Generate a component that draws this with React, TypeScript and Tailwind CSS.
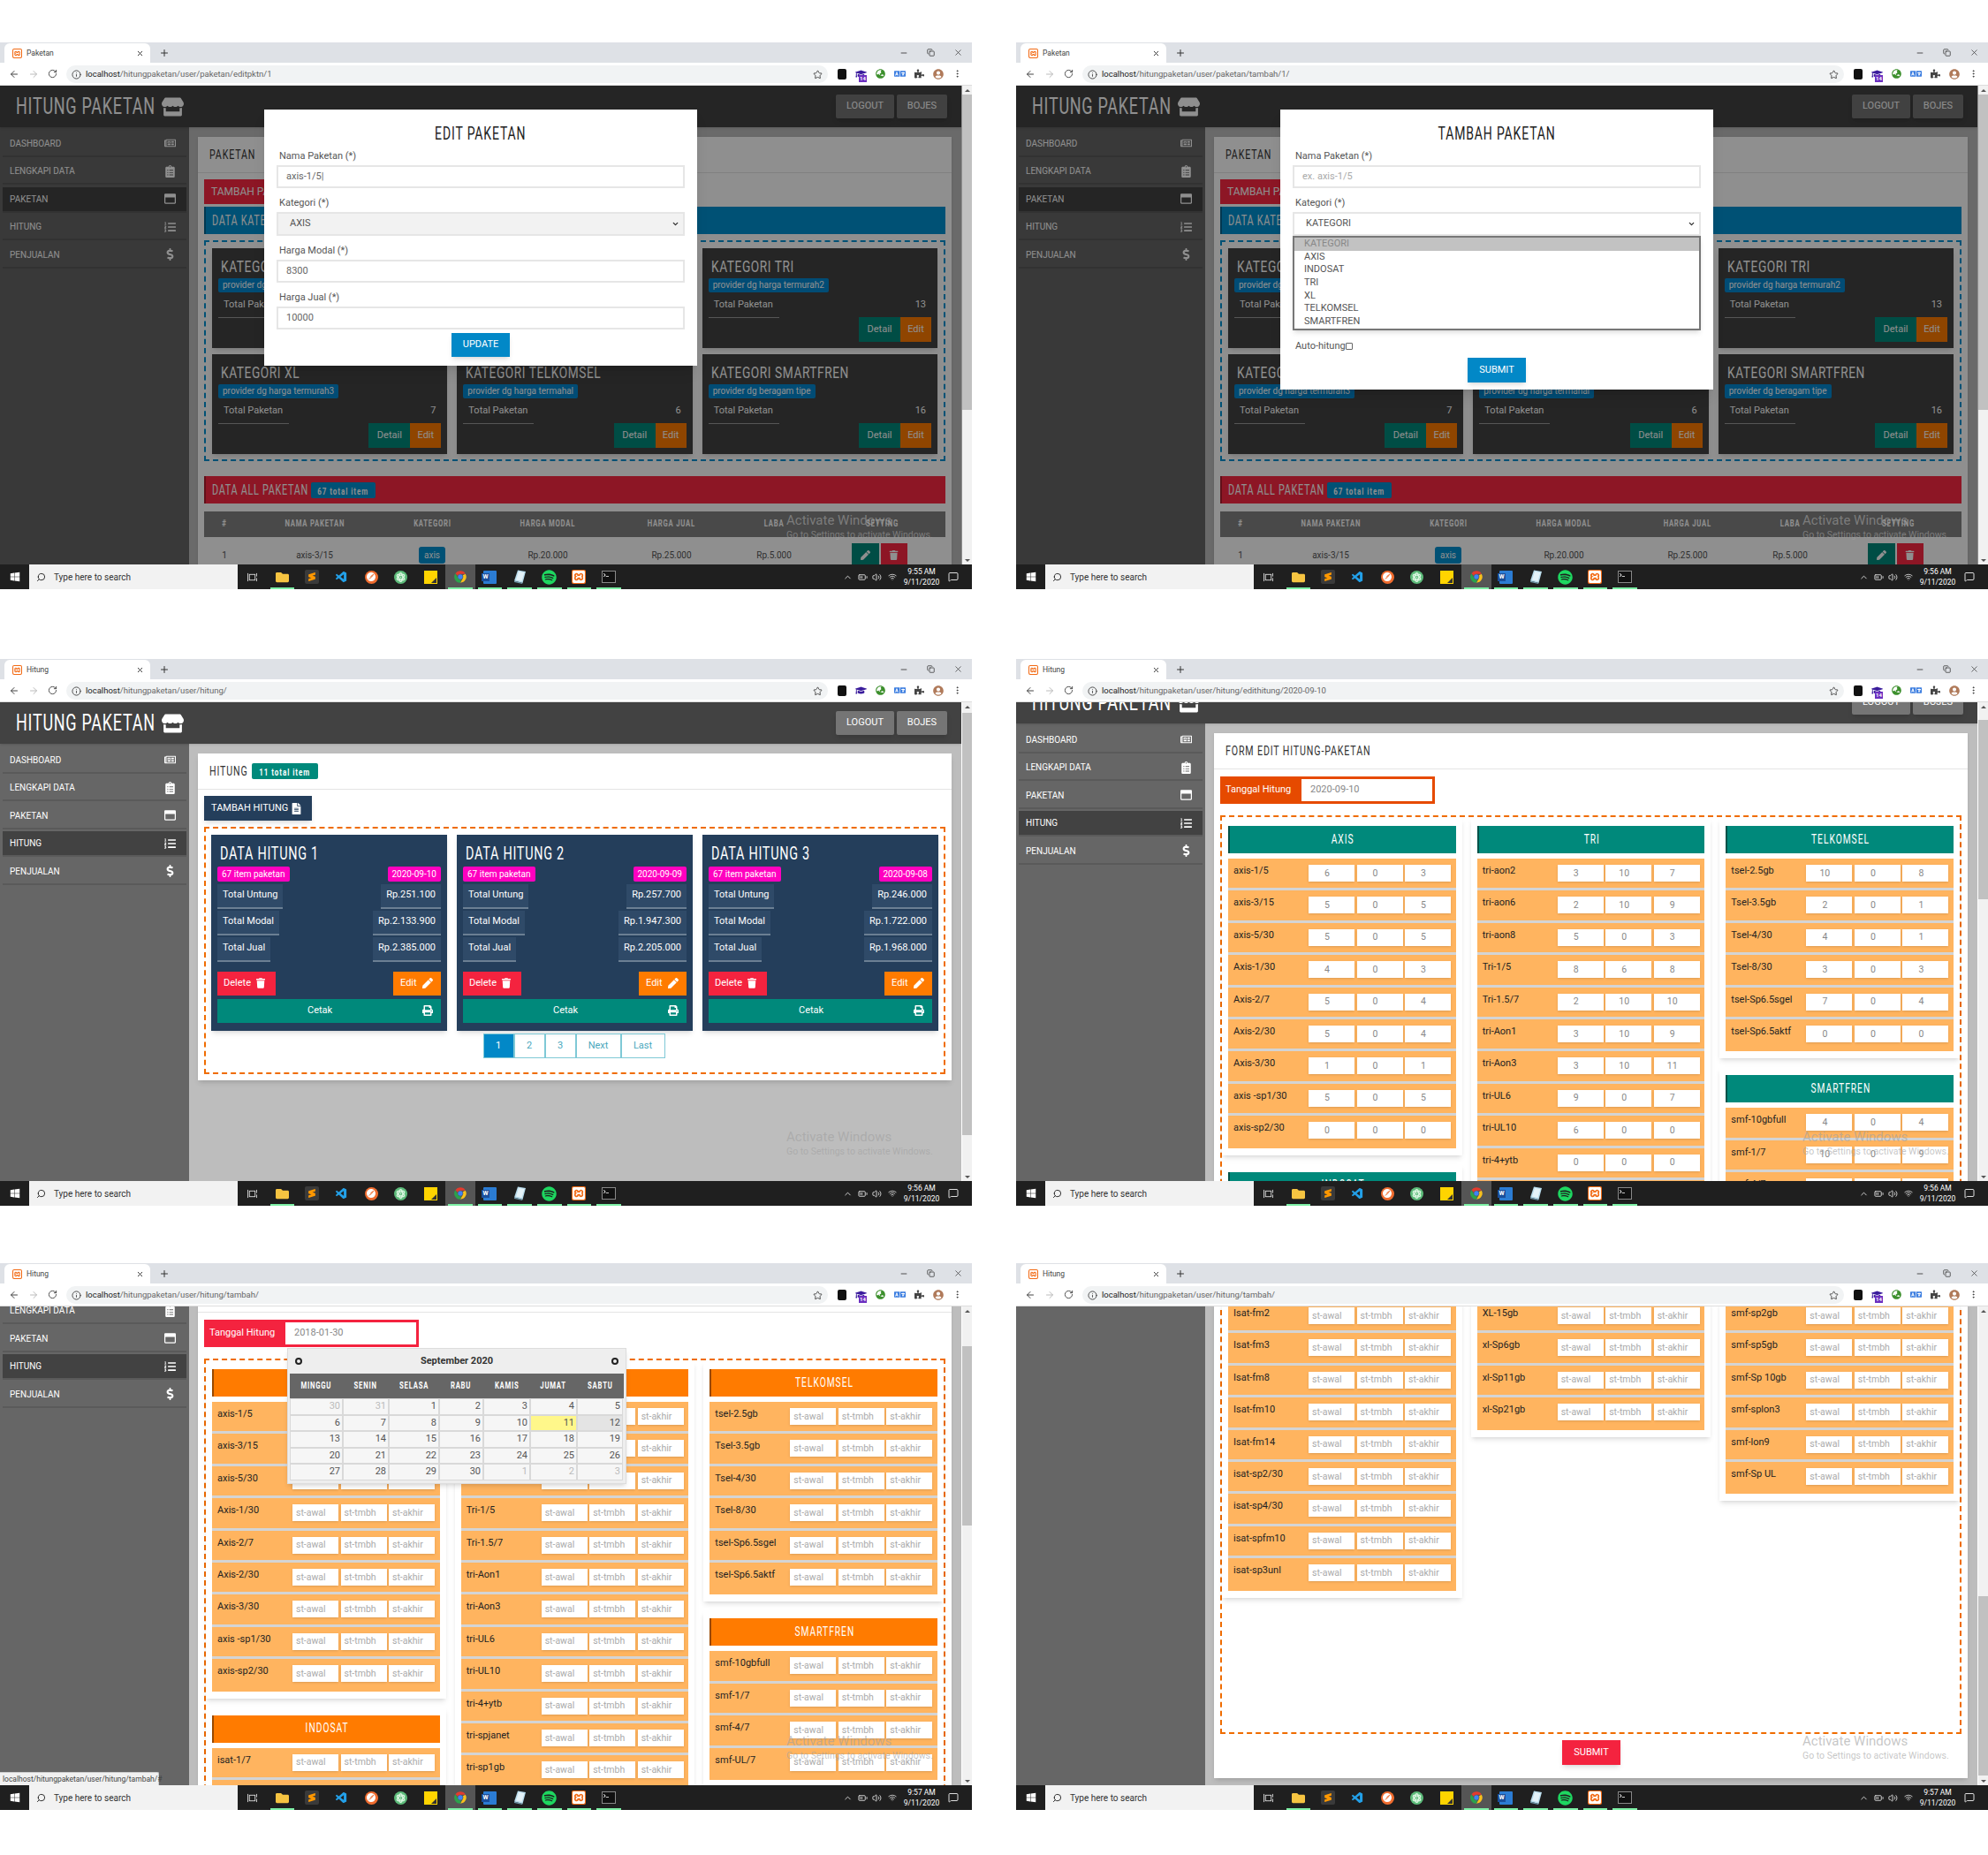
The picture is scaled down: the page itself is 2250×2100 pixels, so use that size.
import type { ReactNode } from "react";
import { ArrowLeft, ArrowRight, RotateCw, Info, Star, Plus, X, Minus, MoreVertical, ChevronUp, ChevronDown, Search, MessageSquare, Volume2, Wifi, BatteryMedium, Copy } from "lucide-react";
import { FaStore, FaRegNewspaper, FaClipboardList, FaRegWindowMaximize, FaListOl, FaDollarSign, FaTrash, FaPen, FaPrint, FaWindows, FaSpotify, FaAtom, FaFolder, FaPuzzlePiece, FaGraduationCap, FaGlobeAsia, FaLanguage, FaUserCircle, FaTerminal, FaFileAlt } from "react-icons/fa";
import { VscVscode } from "react-icons/vsc";
import { SiPostman, SiXampp, SiSublimetext } from "react-icons/si";

// no condensed face is installed, so the display type is Roboto squeezed sideways
function Osw({ children, className = "", scale = "scale-x-[0.71]", origin = "origin-left" }: { children: ReactNode; className?: string; scale?: string; origin?: string }) {
    return <span className={`inline-block whitespace-nowrap ${scale} ${origin} ${className}`}>{children}</span>;
}

function Xampp({ size = 11 }: { size?: number }) {
    return (
        <div className="flex items-center justify-center bg-[#f26a14] rounded-[2px] text-white" style={{ width: size, height: size }}>
            <SiXampp size={size - 2} />
        </div>
    );
}

function ChromeLogo() {
    return (
        <svg width="16" height="16" viewBox="0 0 24 24">
            <path d="M12 2a10 10 0 0 1 8.7 5H12a5 5 0 0 0-4.6 3L3.6 6.2A10 10 0 0 1 12 2z" fill="#e33b2e" />
            <path d="M20.7 7A10 10 0 0 1 12 22l4.3-7.5A5 5 0 0 0 16.3 9.5z" fill="#f8c11c" />
            <path d="M3.6 6.2l4.3 7.5a5 5 0 0 0 5.3 3.2L12 22A10 10 0 0 1 3.6 6.2z" fill="#2ba24c" />
            <circle cx="12" cy="12" r="4" fill="#3f83f3" />
        </svg>
    );
}

function TaskView() {
    return (
        <svg width="11" height="11" viewBox="0 0 12 12" fill="none" stroke="#ddd">
            <rect x="2.5" y="2.5" width="7" height="7" />
            <path d="M0.5 1v10M11.5 1v4M11.5 7v4" />
        </svg>
    );
}

function NotesIcon() {
    return (
        <svg width="15" height="16" viewBox="0 0 15 16">
            <path d="M5 0.5L14 2L10.5 15L1 12.5z" fill="#b9dcec" />
            <path d="M1 12.5L10.5 15L10 16L1 14z" fill="#6d93a6" />
            <path d="M6 2L12.5 3L9.5 13L3 11.5z" fill="#e4f2f8" />
        </svg>
    );
}

function TabStrip({ title }: { title: string }) {
    return (
        <div className="h-[23px] bg-[#dee1e6] flex items-end pl-[5px] shrink-0">
            <div className="w-[165px] h-[22px] bg-white rounded-t-[6px] flex items-center pl-[9px] pr-[7px]">
                <Xampp />
                <span className="ml-[5px] text-[8.5px] text-[#444] flex-1">{title}</span>
                <X className="w-[9px] h-[9px] text-[#333]" strokeWidth={2.5} />
            </div>
            <Plus className="w-[12px] h-[12px] ml-[10px] mb-[5px] text-[#333]" strokeWidth={2} />
            <div className="ml-auto h-full flex items-center pr-[10px] gap-[21px] text-[#333]">
                <Minus className="w-[10px] h-[10px]" />
                <Copy className="w-[9px] h-[9px]" />
                <X className="w-[11px] h-[11px]" strokeWidth={1.5} />
            </div>
        </div>
    );
}

function Toolbar({ url, badge }: { url: [string, string]; badge: boolean }) {
    return (
        <div className="h-[26px] bg-white flex items-center shrink-0 border-b border-[#ddd]">
            <div className="w-[75px] pl-[10px] flex items-center gap-[10px]">
                <ArrowLeft className="w-[12px] h-[12px] text-[#444]" />
                <ArrowRight className="w-[12px] h-[12px] text-[#bbb]" />
                <RotateCw className="w-[11px] h-[11px] text-[#444]" />
            </div>
            <div className="w-[862px] h-[20px] rounded-full bg-[#f1f3f4] flex items-center pl-[6px] pr-[6px] pt-[1px]">
                <Info className="w-[11px] h-[11px] text-[#444]" />
                <span className="ml-[5px] text-[9.5px] text-[#222]">{url[0]}</span>
                <span className="text-[9.5px] text-[#666]">{url[1]}</span>
                <Star className="w-[11px] h-[11px] ml-auto text-[#444]" />
            </div>
            <div className="flex-1 flex items-center pl-[11px] pr-[11px] justify-between">
                <div className="w-[10px] h-[12px] bg-[#111] rounded-[2px]" />
                <div className="relative">
                    <FaGraduationCap className="w-[13px] h-[13px] text-[#3a1c9c]" />
                    {badge && <span className="absolute left-[4px] top-[8px] bg-[#6b2fc0] text-white text-[6px] leading-[8px] px-[1px] font-bold">14</span>}
                </div>
                <FaGlobeAsia className="w-[11px] h-[11px] text-[#3c8f2c]" />
                <FaLanguage className="w-[13px] h-[13px] text-[#3b7de0]" />
                <FaPuzzlePiece className="w-[11px] h-[11px] text-[#444]" />
                <FaUserCircle className="w-[12px] h-[12px] text-[#b07a5a]" />
                <MoreVertical className="w-[11px] h-[11px] text-[#333]" />
            </div>
        </div>
    );
}

function Slot({ children, on, active }: { children: ReactNode; on?: boolean; active?: boolean }) {
    return (
        <div className={`relative w-[33.6px] h-full flex items-center justify-center ${active ? "bg-[#555]" : ""}`}>
            {children}
            {on && <div className="absolute left-[3px] right-[3px] bottom-0 h-[2px] bg-[#7df0a5]" />}
        </div>
    );
}

function Taskbar({ time }: { time: string }) {
    return (
        <div className="h-[28px] bg-[#1f1f1f] flex items-center shrink-0 text-white">
            <div className="w-[33px] flex justify-center">
                <FaWindows className="w-[12px] h-[12px]" />
            </div>
            <div className="w-[236px] h-full bg-[#f2f2f2] flex items-center pl-[8px]">
                <Search className="w-[11px] h-[11px] text-[#222] -scale-x-100" />
                <span className="ml-[9px] text-[10px] text-[#333]">Type here to search</span>
            </div>
            <div className="h-full flex">
                <Slot><TaskView /></Slot>
                <Slot on><FaFolder className="w-[15px] h-[15px] text-[#f6c441]" /></Slot>
                <Slot><div className="w-[16px] h-[16px] bg-[#3a3a3a] rounded-[2px] flex items-center justify-center"><SiSublimetext className="w-[10px] h-[10px] text-[#ff9800]" /></div></Slot>
                <Slot><VscVscode className="w-[15px] h-[15px] text-[#23a0e8]" /></Slot>
                <Slot><div className="w-[15px] h-[15px] rounded-full bg-[#ef6c2f] flex items-center justify-center"><SiPostman className="w-[10px] h-[10px] text-white" /></div></Slot>
                <Slot><div className="w-[15px] h-[15px] rounded-full bg-[#5dbb7a] flex items-center justify-center"><FaAtom className="w-[11px] h-[11px] text-[#d9f5df]" /></div></Slot>
                <Slot><div className="relative w-[15px] h-[15px] bg-[#ffd400]"><div className="absolute right-[1px] bottom-[1px] w-0 h-0 border-l-[6px] border-l-transparent border-b-[6px] border-b-[#333]" /></div></Slot>
                <Slot on active><ChromeLogo /></Slot>
                <Slot on><div className="relative w-[15px] h-[15px] bg-[#2b7cd3] rounded-[1px]"><div className="absolute -left-[2px] top-[3px] w-[9px] h-[9px] bg-[#1a4f9c] text-white text-[7px] leading-[9px] text-center font-bold">W</div></div></Slot>
                <Slot on><NotesIcon /></Slot>
                <Slot on><FaSpotify className="w-[17px] h-[17px] text-[#1ed760]" /></Slot>
                <Slot on><Xampp size={16} /></Slot>
                <Slot on><div className="w-[16px] h-[14px] bg-[#111] border border-[#888] flex items-start p-[1px]"><FaTerminal className="w-[6px] h-[6px] text-white" /></div></Slot>
            </div>
            <div className="ml-auto flex items-center pr-[15px] text-[#ddd]">
                <ChevronUp className="w-[11px] h-[11px]" />
                <BatteryMedium className="w-[11px] h-[11px] ml-[6px]" />
                <Volume2 className="w-[11px] h-[11px] ml-[5px]" />
                <Wifi className="w-[10px] h-[10px] ml-[7px]" />
                <div className="ml-[6px] w-[44px] text-center text-[8.5px] leading-[12px] text-white">
                    <div>{time}</div>
                    <div>9/11/2020</div>
                </div>
                <MessageSquare className="w-[12px] h-[12px] ml-[8px]" />
            </div>
        </div>
    );
}

function Scrollbar({ thumb }: { thumb: string }) {
    return (
        <div className="w-[11px] ml-[1px] bg-[#f1f1f1] flex flex-col items-center shrink-0">
            <div className="h-[10px] flex items-center text-[#555]"><div className="w-0 h-0 border-x-[3px] border-x-transparent border-b-[3px] border-b-[#555]" /></div>
            <div className={`w-full bg-[#c1c1c1] shrink-0 ${thumb}`} />
            <div className="mt-auto h-[10px] flex items-center"><div className="w-0 h-0 border-x-[3px] border-x-transparent border-t-[3px] border-t-[#555]" /></div>
        </div>
    );
}

function Watermark() {
    return (
        <div className="absolute left-[890px] top-[482px] text-[#a0a0a0]/60 z-30 pointer-events-none">
            <div className="text-[15px] leading-[20px]">Activate Windows</div>
            <div className="text-[10.5px] leading-[14px] whitespace-nowrap">Go to Settings to activate Windows.</div>
        </div>
    );
}

function Browser({ title, url, time, thumb, badge = true, over, children }: { title: string; url: [string, string]; time: string; thumb: string; badge?: boolean; over?: ReactNode; children: ReactNode }) {
    return (
        <div className="w-[1100px] h-[619px] flex flex-col overflow-hidden bg-white">
            <TabStrip title={title} />
            <Toolbar url={url} badge={badge} />
            <div className="relative flex-1 flex min-h-0">
                <div className="relative flex-1 overflow-hidden">{children}</div>
                <Scrollbar thumb={thumb} />
                {over}
                <Watermark />
            </div>
            <Taskbar time={time} />
        </div>
    );
}

const MENU = [
    { name: "DASHBOARD", icon: FaRegNewspaper },
    { name: "LENGKAPI DATA", icon: FaClipboardList },
    { name: "PAKETAN", icon: FaRegWindowMaximize },
    { name: "HITUNG", icon: FaListOl },
    { name: "PENJUALAN", icon: FaDollarSign },
];

function Sidebar({ active }: { active?: string }) {
    return (
        <div className="w-[214px] bg-[#666] shrink-0 pt-[2px] pl-[3px] pr-[3px] min-h-[700px]">
            {active && MENU.map((m) => (
                <div key={m.name} className={`h-[29px] mt-[2.6px] flex items-center pl-[8px] pr-[12px] text-white border-b-2 border-[#5a5a5a] ${m.name === active ? "bg-[#424242]" : ""}`}>
                    <span className="text-[10px] flex-1">{m.name}</span>
                    <m.icon className="w-[13px] h-[14px]" />
                </div>
            ))}
        </div>
    );
}

function Header() {
    return (
        <div className="h-[47px] bg-[#424242] flex items-center pl-[18px] pr-[16px] shadow-sm relative z-10">
            <div className="w-[165px]">
                <Osw className="text-white text-[25px] tracking-[1px]" scale="scale-x-[0.72]">HITUNG PAKETAN</Osw>
            </div>
            <FaStore className="w-[25px] h-[22px] text-white" />
            <div className="ml-auto flex gap-[3px]">
                <div className="w-[66px] h-[27px] bg-[#757575] rounded-[2px] shadow-md text-white text-[11px] flex items-center justify-center">LOGOUT</div>
                <div className="w-[57px] h-[27px] bg-[#757575] rounded-[2px] shadow-md text-white text-[11px] flex items-center justify-center">BOJES</div>
            </div>
        </div>
    );
}

function AppPage({ active, scroll, children }: { active: string; scroll: string; children: ReactNode }) {
    return (
        <div className={scroll}>
            <Header />
            <div className="flex">
                <Sidebar active={active} />
                <div className="flex-1 bg-[#bdbdbd] pl-[10px] pr-[11px] pt-[11px] min-h-[700px]">{children}</div>
            </div>
        </div>
    );
}

function CardHead({ children }: { children: ReactNode }) {
    return <div className="h-[41px] border-b border-[#e4e4e4] flex items-center pl-[13px] gap-[5px]">{children}</div>;
}

function Title({ children, box = "" }: { children: ReactNode; box?: string }) {
    return (
        <div className={box}>
            <Osw className="text-[15px] tracking-[1.2px] text-[#333]">{children}</Osw>
        </div>
    );
}

function Bar({ bg, children }: { bg: string; children: ReactNode }) {
    return (
        <div className={`h-[31px] flex items-center pl-[7px] border-l-2 border-black/30 ${bg}`}>
            {children}
        </div>
    );
}

const KATEGORI = [
    { name: "KATEGORI AXIS", note: "provider dg harga termurah1", total: 9 },
    { name: "KATEGORI INDOSAT", note: "provider dg harga murah", total: 16 },
    { name: "KATEGORI TRI", note: "provider dg harga termurah2", total: 13 },
    { name: "KATEGORI XL", note: "provider dg harga termurah3", total: 7 },
    { name: "KATEGORI TELKOMSEL", note: "provider dg harga termahal", total: 6 },
    { name: "KATEGORI SMARTFREN", note: "provider dg beragam tipe", total: 16 },
];

function KategoriCard({ name, note, total }: { name: string; note: string; total: number }) {
    return (
        <div className="h-[113px] bg-[#424242] shadow-md px-[7px] text-white">
            <div className="leading-[24px] pl-[3px] pt-[9px] h-[34px]">
                <Osw className="text-[19px] tracking-[0.8px]" scale="scale-x-[0.72]">{name}</Osw>
            </div>
            <div className="w-fit h-[16px] leading-[16px] rounded-[2px] bg-[#0288d1] px-[5px] text-[10px]">{note}</div>
            <div className="flex justify-between mt-[7px] text-[11px] px-[6px] leading-[14px]">
                <span className="w-[68px] whitespace-nowrap">Total Paketan</span>
                <span>{total}</span>
            </div>
            <div className="flex justify-between items-start mt-[7px]">
                <div className="w-[80px] h-[1px] bg-[#999]" />
                <div className="flex text-[11px]">
                    <div className="w-[47px] h-[28px] bg-[#00897b] flex items-center justify-center">Detail</div>
                    <div className="w-[35px] h-[28px] bg-[#ff7b00] flex items-center justify-center">Edit</div>
                </div>
            </div>
        </div>
    );
}

const TH = ["#", "NAMA PAKETAN", "KATEGORI", "HARGA MODAL", "HARGA JUAL", "LABA", "SETTING"];
const COLS = "grid grid-cols-[46px_158px_108px_154px_126px_106px_138px] items-center justify-items-center text-center";

function PaketanBody() {
    return (
        <div className="bg-white shadow-sm">
            <CardHead><Title>PAKETAN</Title></CardHead>
            <div className="px-[7px] pt-[7px]">
                <div className="w-[150px] h-[28px] bg-[#fb2843] text-white text-[12px] flex items-center pl-[8px] mb-[3px]">TAMBAH PAKETAN</div>
                <Bar bg="bg-[#0090d0]">
                    <Osw className="text-white text-[16px] tracking-[1px]" scale="scale-x-[0.68]">DATA KATEGORI</Osw>
                </Bar>
                <div className="mt-[7px] h-[250px] border-2 border-dashed border-[#0090d0] p-[7px] grid grid-cols-3 gap-x-[11px] gap-y-[7px]">
                    {KATEGORI.map((k) => <KategoriCard key={k.name} {...k} />)}
                </div>
                <div className="mt-[17px]">
                    <Bar bg="bg-[#fb2843]">
                        <div className="w-[112px]">
                            <Osw className="text-white text-[16px] tracking-[1px]" scale="scale-x-[0.68]">DATA ALL PAKETAN</Osw>
                        </div>
                        <div className="w-[73px] h-[18px] leading-[18px] rounded-[2px] bg-[#0090d0] text-white text-center">
                            <Osw className="text-[10px] font-bold tracking-[1.2px]" scale="scale-x-[0.8]" origin="origin-center">67 total item</Osw>
                        </div>
                    </Bar>
                </div>
                <div className={`${COLS} mt-[9px] h-[29px] bg-[#828282] text-white`}>
                    {TH.map((t) => <Osw key={t} className="text-[11px] font-bold tracking-[1.1px]" scale="scale-x-[0.7]" origin="origin-center">{t}</Osw>)}
                </div>
                <div className={`${COLS} h-[40px] text-[10px] text-[#555]`}>
                    <span>1</span>
                    <span>axis-3/15</span>
                    <span><span className="inline-block rounded-[3px] bg-[#0090d0] text-white px-[6px] py-[2px]">axis</span></span>
                    <span>Rp.20.000</span>
                    <span>Rp.25.000</span>
                    <span>Rp.5.000</span>
                    <span className="flex justify-center gap-[2px] pr-[6px] text-white self-start mt-[7px]">
                        <span className="w-[31px] h-[26px] bg-[#00897b] flex items-center justify-center"><FaPen className="w-[11px] h-[11px]" /></span>
                        <span className="w-[30px] h-[26px] bg-[#fb2843] flex items-center justify-center"><FaTrash className="w-[11px] h-[11px]" /></span>
                    </span>
                </div>
            </div>
        </div>
    );
}

function Label({ children }: { children: ReactNode }) {
    return <div className="text-[11px] text-[#555] pl-[3px] h-[14px] leading-[14px] mb-[3px]">{children}</div>;
}

function Field({ label, value, placeholder }: { label: string; value?: string; placeholder?: string }) {
    return (
        <div className="mb-[10px]">
            <Label>{label}</Label>
            <div className="h-[26px] border-2 border-[#e6e6e6] flex items-center pl-[9px] text-[11px] text-[#666]">
                {value}
                {placeholder && <span className="text-[#aaa]">{placeholder}</span>}
            </div>
        </div>
    );
}

function Modal({ h, title, children }: { h: string; title: string; children: ReactNode }) {
    return (
        <>
            <div className="absolute left-0 top-0 w-[1089px] h-full bg-black/[0.44] z-10" />
            <div className={`absolute left-[299px] top-[27px] w-[490px] ${h} bg-white shadow-lg z-20 px-[14px]`}>
                <div className="text-center text-[#222] pt-[12px] h-[46px]">
                    <Osw className="text-[20px] tracking-[1.2px]" scale="scale-x-[0.7]" origin="origin-center">{title}</Osw>
                </div>
                {children}
            </div>
        </>
    );
}

function SelectBox({ value, grey }: { value: string; grey?: boolean }) {
    return (
        <div className={`h-[27px] flex items-center pl-[13px] pr-[4px] text-[11px] text-[#555] border-2 border-[#e6e6e6] ${grey ? "bg-[#f2f2f2]" : "bg-white"}`}>
            <span className="flex-1">{value}</span>
            <ChevronDown className="w-[9px] h-[9px] text-[#222]" strokeWidth={3} />
        </div>
    );
}

function EditModal() {
    return (
        <Modal h="h-[290px]" title="EDIT PAKETAN">
            <Field label="Nama Paketan (*)" value="axis-1/5|" />
            <div className="mb-[10px]">
                <Label>Kategori (*)</Label>
                <SelectBox value="AXIS" grey />
            </div>
            <Field label="Harga Modal (*)" value="8300" />
            <div className="-mb-[6px]"><Field label="Harga Jual (*)" value="10000" /></div>
            <div className="w-[66px] h-[27px] mx-auto bg-[#0288c7] text-white text-[11px] flex items-center justify-center shadow-md">UPDATE</div>
        </Modal>
    );
}

function TambahModal() {
    return (
        <Modal h="h-[317px]" title="TAMBAH PAKETAN">
            <Field label="Nama Paketan (*)" placeholder="ex. axis-1/5" />
            <div>
                <Label>Kategori (*)</Label>
                <SelectBox value="KATEGORI" />
                <div className="border-2 border-[#777] shadow-md text-[11px] text-[#555] bg-white">
                    <div className="h-[14.7px] leading-[14.7px] pl-[11px] bg-[#c2c2c2] text-[#888]">KATEGORI</div>
                    {["AXIS", "INDOSAT", "TRI", "XL", "TELKOMSEL", "SMARTFREN"].map((o) => (
                        <div key={o} className="h-[14.7px] leading-[14.7px] pl-[11px]">{o}</div>
                    ))}
                </div>
            </div>
            <div className="flex items-center text-[11px] text-[#555] pl-[3px] mt-[11px] h-[14px]">
                Auto-hitung
                <div className="w-[8px] h-[8px] border border-[#666] rounded-[1px]" />
            </div>
            <div className="w-[66px] h-[28px] mt-[6px] mx-auto bg-[#0288c7] text-white text-[11px] flex items-center justify-center shadow-md">SUBMIT</div>
        </Modal>
    );
}

const HITUNG = [
    { n: 1, date: "2020-09-10", untung: "Rp.251.100", modal: "Rp.2.133.900", jual: "Rp.2.385.000" },
    { n: 2, date: "2020-09-09", untung: "Rp.257.700", modal: "Rp.1.947.300", jual: "Rp.2.205.000" },
    { n: 3, date: "2020-09-08", untung: "Rp.246.000", modal: "Rp.1.722.000", jual: "Rp.1.968.000" },
];

function Chip({ children }: { children: ReactNode }) {
    return <div className="h-[28px] bg-[#2f4a68] border-b-2 border-[#6b7f93] px-[6px] flex items-center text-[11px]">{children}</div>;
}

function HitungCard({ n, date, untung, modal, jual }: (typeof HITUNG)[number]) {
    const rows: [string, string][] = [["Total Untung", untung], ["Total Modal", modal], ["Total Jual", jual]];
    return (
        <div className="h-[222px] bg-[#243e5b] shadow-md px-[7px] text-white">
            <div className="pl-[3px] pt-[8px] h-[36px] leading-[26px]">
                <Osw className="text-[20px] tracking-[1px]" scale="scale-x-[0.72]">DATA HITUNG {n}</Osw>
            </div>
            <div className="flex justify-between text-[10px] h-[17px] leading-[17px] mb-[2.5px]">
                <span className="bg-[#ff00bf] rounded-[2px] px-[5px]">67 item paketan</span>
                <span className="bg-[#ff00bf] rounded-[2px] px-[5px]">{date}</span>
            </div>
            {rows.map(([a, b]) => (
                <div key={a} className="flex justify-between mb-[2px]">
                    <Chip>{a}</Chip>
                    <Chip>{b}</Chip>
                </div>
            ))}
            <div className="flex justify-between mt-[11px] text-[11px]">
                <div className="w-[66px] h-[27px] bg-[#f4233f] flex items-center pl-[7px] gap-[6px]">Delete <FaTrash className="w-[10px] h-[12px]" /></div>
                <div className="w-[54px] h-[27px] bg-[#ff7b00] flex items-center pl-[8px] gap-[6px]">Edit <FaPen className="w-[12px] h-[12px]" /></div>
            </div>
            <div className="h-[27px] mt-[4px] bg-[#00897b] flex items-center justify-between pl-[102px] pr-[9px] text-[11px]">
                Cetak <FaPrint className="w-[12px] h-[12px]" />
            </div>
        </div>
    );
}

function HitungBody() {
    const pages = [
        { t: "1", w: "w-[35px]" }, { t: "2", w: "w-[35px]" }, { t: "3", w: "w-[35px]" }, { t: "Next", w: "w-[51px]" }, { t: "Last", w: "w-[50px]" },
    ];
    return (
        <div className="bg-white shadow-md h-[370px]">
            <CardHead>
                <Title box="w-[43px]">HITUNG</Title>
                <div className="w-[75px] h-[18px] leading-[18px] rounded-[2px] bg-[#00897b] text-white text-center">
                    <Osw className="text-[10px] font-bold tracking-[1.2px]" scale="scale-x-[0.8]" origin="origin-center">11 total item</Osw>
                </div>
            </CardHead>
            <div className="px-[7px] pt-[7px]">
                <div className="w-[122px] h-[28px] bg-[#243e5b] text-white text-[11px] flex items-center pl-[8px] gap-[4px] shadow-md">
                    TAMBAH HITUNG
                    <FaFileAlt className="w-[11px] h-[13px]" />
                </div>
                <div className="mt-[7px] h-[280px] border-2 border-dashed border-[#ef6c00] px-[6px] pt-[7px]">
                    <div className="grid grid-cols-3 gap-x-[11px]">
                        {HITUNG.map((h) => <HitungCard key={h.n} {...h} />)}
                    </div>
                    <div className="flex justify-center mt-[3px] pr-[2px]">
                        {pages.map((p, i) => (
                            <div key={p.t} className={`${p.w} h-[28px] border border-[#7fc9d6] flex items-center justify-center text-[11px] ${i === 0 ? "bg-[#0288c7] text-white" : "text-[#4aa8bd]"}`}>{p.t}</div>
                        ))}
                    </div>
                </div>
            </div>
        </div>
    );
}

type Row = [string, (string | number)[]?];

const AXIS: Row[] = [["axis-1/5", [6, 0, 3]], ["axis-3/15", [5, 0, 5]], ["axis-5/30", [5, 0, 5]], ["Axis-1/30", [4, 0, 3]], ["Axis-2/7", [5, 0, 4]], ["Axis-2/30", [5, 0, 4]], ["Axis-3/30", [1, 0, 1]], ["axis -sp1/30", [5, 0, 5]], ["axis-sp2/30", [0, 0, 0]]];
const TRI: Row[] = [["tri-aon2", [3, 10, 7]], ["tri-aon6", [2, 10, 9]], ["tri-aon8", [5, 0, 3]], ["Tri-1/5", [8, 6, 8]], ["Tri-1.5/7", [2, 10, 10]], ["tri-Aon1", [3, 10, 9]], ["tri-Aon3", [3, 10, 11]], ["tri-UL6", [9, 0, 7]], ["tri-UL10", [6, 0, 0]], ["tri-4+ytb", [0, 0, 0]], ["tri-spjanet", [0, 0, 0]], ["tri-sp1gb", [0, 0, 0]]];
const TSEL: Row[] = [["tsel-2.5gb", [10, 0, 8]], ["Tsel-3.5gb", [2, 0, 1]], ["Tsel-4/30", [4, 0, 1]], ["Tsel-8/30", [3, 0, 3]], ["tsel-Sp6.5sgel", [7, 0, 4]], ["tsel-Sp6.5aktf", [0, 0, 0]]];
const SMF: Row[] = [["smf-10gbfull", [4, 0, 4]], ["smf-1/7", [10, 0, 9]], ["smf-4/7", [0, 0, 0]], ["smf-UL/7", [0, 0, 0]]];
const ISAT: Row[] = [["isat-1/7", [0, 0, 0]], ["isat-2/7", [0, 0, 0]]];
const ISAT2: Row[] = [["Isat-fm2"], ["Isat-fm3"], ["Isat-fm8"], ["Isat-fm10"], ["Isat-fm14"], ["isat-sp2/30"], ["isat-sp4/30"], ["isat-spfm10"], ["isat-sp3unl"]];
const XL2: Row[] = [["XL-15gb"], ["xl-Sp6gb"], ["xl-Sp11gb"], ["xl-Sp21gb"]];
const SMF2: Row[] = [["smf-sp2gb"], ["smf-sp5gb"], ["smf-Sp 10gb"], ["smf-splon3"], ["smf-lon9"], ["smf-Sp UL"]];
const HOLDERS = ["st-awal", "st-tmbh", "st-akhir"];

function PaketRows({ rows, filled }: { rows: Row[]; filled: boolean }) {
    return (
        <>
            {rows.map(([label, vals], i) => (
                <div key={label} className={`bg-[#ffb45f] flex pt-[7px] h-[36.4px] ${i < rows.length - 1 ? "border-b-[3px] border-[#d4d4d4]" : "h-[33.4px]"}`}>
                    <div className="w-[91px] pl-[6px] pt-[1px] text-[11px] leading-[12px] text-[#222] whitespace-nowrap">{label}</div>
                    <div className="flex gap-[2.5px]">
                        {[0, 1, 2].map((c) => (
                            <div key={c} className={`w-[52px] h-[19px] bg-white shadow-sm flex items-center text-[10.5px] ${filled ? "justify-center text-[#888] pr-[10px]" : "pl-[4px] text-[#aaa]"}`}>
                                {filled ? vals?.[c] : HOLDERS[c]}
                            </div>
                        ))}
                    </div>
                </div>
            ))}
        </>
    );
}

function PaketCard({ name, rows, filled, color }: { name?: string; rows: Row[]; filled: boolean; color: string }) {
    return (
        <div className="bg-white shadow-md px-[7px] pb-[8px] pt-[9px] mb-[10px]">
            {name && (
                <div className={`h-[31px] mb-[6px] flex items-center justify-center border-l-2 border-black/40 text-white ${color}`}>
                    <Osw className="text-[15.5px] tracking-[1.5px]" scale="scale-x-[0.66]" origin="origin-center">{name}</Osw>
                </div>
            )}
            <PaketRows rows={rows} filled={filled} />
        </div>
    );
}

function FormBody({ title, date, tone, heading, filled }: { title: string; date: string; tone: string; heading: string; filled: boolean }) {
    return (
        <div className="bg-white shadow-sm">
            <CardHead><Title>{title}</Title></CardHead>
            <div className="px-[7px] pt-[8px]">
                <div className={`w-[243px] h-[31px] flex items-center p-[3px] text-white text-[11px] ${tone}`}>
                    <span className="w-[89px] pl-[3px]">Tanggal Hitung</span>
                    <div className="flex-1 h-full bg-white flex items-center pl-[10px] text-[11px] text-[#888]">{date}</div>
                </div>
                <div className="mt-[13px] border-2 border-dashed border-[#ef6c00] h-[900px] grid grid-cols-3 gap-x-[10px] pt-[1px]">
                    <div>
                        <PaketCard name="AXIS" rows={AXIS} filled={filled} color={heading} />
                        <PaketCard name="INDOSAT" rows={ISAT} filled={filled} color={heading} />
                    </div>
                    <div><PaketCard name="TRI" rows={TRI} filled={filled} color={heading} /></div>
                    <div>
                        <PaketCard name="TELKOMSEL" rows={TSEL} filled={filled} color={heading} />
                        <PaketCard name="SMARTFREN" rows={SMF} filled={filled} color={heading} />
                    </div>
                </div>
            </div>
        </div>
    );
}

const DAYS = ["MINGGU", "SENIN", "SELASA", "RABU", "KAMIS", "JUMAT", "SABTU"];
const WEEKS = [[30, 31, 1, 2, 3, 4, 5], [6, 7, 8, 9, 10, 11, 12], [13, 14, 15, 16, 17, 18, 19], [20, 21, 22, 23, 24, 25, 26], [27, 28, 29, 30, 1, 2, 3]];
const CAL_COLS = "grid grid-cols-[60px_52px_57px_50px_53px_53px_52px]";

function Calendar() {
    return (
        <div className="absolute left-[325px] top-[47px] w-[384px] h-[154px] bg-[#eee] shadow-md border border-[#ddd] px-[2px] z-20">
            <div className="h-[28px] flex items-center justify-between px-[6px] text-[11px] font-bold text-[#333]">
                <span className="w-[8px] h-[8px] rounded-full border-2 border-[#222] bg-[#eee]" />
                September 2020
                <span className="w-[8px] h-[8px] rounded-full border-2 border-[#222] bg-[#eee]" />
            </div>
            <div className={`${CAL_COLS} h-[28px] items-center justify-items-center bg-[#666] text-white text-center`}>
                {DAYS.map((d) => <Osw key={d} className="text-[11px] font-bold tracking-[1.1px]" scale="scale-x-[0.7]" origin="origin-center">{d}</Osw>)}
            </div>
            {WEEKS.map((w, i) => (
                <div key={i} className={`${CAL_COLS} h-[18.5px]`}>
                    {w.map((d, j) => {
                        const other = (i === 0 && j < 2) || (i === 4 && j > 3);
                        const today = i === 1 && j === 5;
                        const weekend = i === 1 && j === 6;
                        return (
                            <div key={j} className={`border border-[#d9d9d9] text-right pr-[2px] text-[11px] leading-[16px] ${other ? "text-[#bbb]" : "text-[#555]"} ${today ? "bg-[#fff78a]" : weekend ? "bg-[#e4e4e4]" : "bg-[#f6f6f6]"}`}>{d}</div>
                        );
                    })}
                </div>
            ))}
        </div>
    );
}

function BottomPage() {
    return (
        <div className="flex h-full overflow-hidden">
            <Sidebar />
            <div className="flex-1 bg-[#bdbdbd] pl-[10px] pr-[11px]">
                <div className="-mt-[6px] h-[540px] bg-white shadow-md px-[7px]">
                    <div className="h-[490px] border-2 border-t-0 border-dashed border-[#ef6c00] grid grid-cols-3 gap-x-[10px] items-start">
                        <div className="bg-white shadow-md px-[7px] pb-[8px]"><PaketRows rows={ISAT2} filled={false} /></div>
                        <div className="bg-white shadow-md px-[7px] pb-[8px]"><PaketRows rows={XL2} filled={false} /></div>
                        <div className="bg-white shadow-md px-[7px] pb-[8px]"><PaketRows rows={SMF2} filled={false} /></div>
                    </div>
                    <div className="w-[66px] h-[28px] mt-[7px] ml-[387px] bg-[#f4233f] text-white text-[11px] flex items-center justify-center shadow-md">SUBMIT</div>
                </div>
            </div>
        </div>
    );
}

function StatusTip() {
    return <div className="absolute left-0 bottom-0 w-[180px] h-[15px] bg-[#f1f1f1] border-t border-r border-[#ccc] rounded-tr-[2px] text-[8.5px] leading-[14px] pl-[3px] text-[#444] z-20 whitespace-nowrap">localhost/hitungpaketan/user/hitung/tambah/#</div>;
}

export default function App() {
    return (
        <div className="w-[2250px] h-[2100px] bg-white pt-[48px] font-['Roboto',sans-serif] overflow-hidden">
            <div className="flex gap-[50px]">
                <Browser title="Paketan" url={["localhost", "/hitungpaketan/user/paketan/editpktn/1"]} time="9:55 AM" thumb="mt-[0px] h-[357px]" over={<EditModal />}>
                    <AppPage active="PAKETAN" scroll=""><PaketanBody /></AppPage>
                </Browser>
                <Browser title="Paketan" url={["localhost", "/hitungpaketan/user/paketan/tambah/1/"]} time="9:56 AM" thumb="mt-[0px] h-[357px]" over={<TambahModal />}>
                    <AppPage active="PAKETAN" scroll=""><PaketanBody /></AppPage>
                </Browser>
            </div>
            <div className="flex gap-[50px] mt-[79px]">
                <Browser title="Hitung" url={["localhost", "/hitungpaketan/user/hitung/"]} time="9:56 AM" thumb="mt-[2px] h-[478px]" badge={false}>
                    <AppPage active="HITUNG" scroll=""><HitungBody /></AppPage>
                </Browser>
                <Browser title="Hitung" url={["localhost", "/hitungpaketan/user/hitung/edithitung/2020-09-10"]} time="9:56 AM" thumb="mt-[10px] h-[203px]">
                    <AppPage active="HITUNG" scroll="-mt-[23px]">
                        <FormBody title="FORM EDIT HITUNG-PAKETAN" date="2020-09-10" tone="bg-[#e64a00]" heading="bg-[#00897b]" filled />
                    </AppPage>
                </Browser>
            </div>
            <div className="flex gap-[50px] mt-[65px]">
                <Browser title="Hitung" url={["localhost", "/hitungpaketan/user/hitung/tambah/"]} time="9:57 AM" thumb="mt-[35px] h-[203px]" over={<><Calendar /><StatusTip /></>}>
                    <AppPage active="HITUNG" scroll="-mt-[92px]">
                        <FormBody title="FORM TAMBAH HITUNG-PAKETAN" date="2018-01-30" tone="bg-[#f4233f]" heading="bg-[#ff7b00]" filled={false} />
                    </AppPage>
                </Browser>
                <Browser title="Hitung" url={["localhost", "/hitungpaketan/user/hitung/tambah/"]} time="9:57 AM" thumb="mt-[318px] h-[203px]">
                    <BottomPage />
                </Browser>
            </div>
        </div>
    );
}
